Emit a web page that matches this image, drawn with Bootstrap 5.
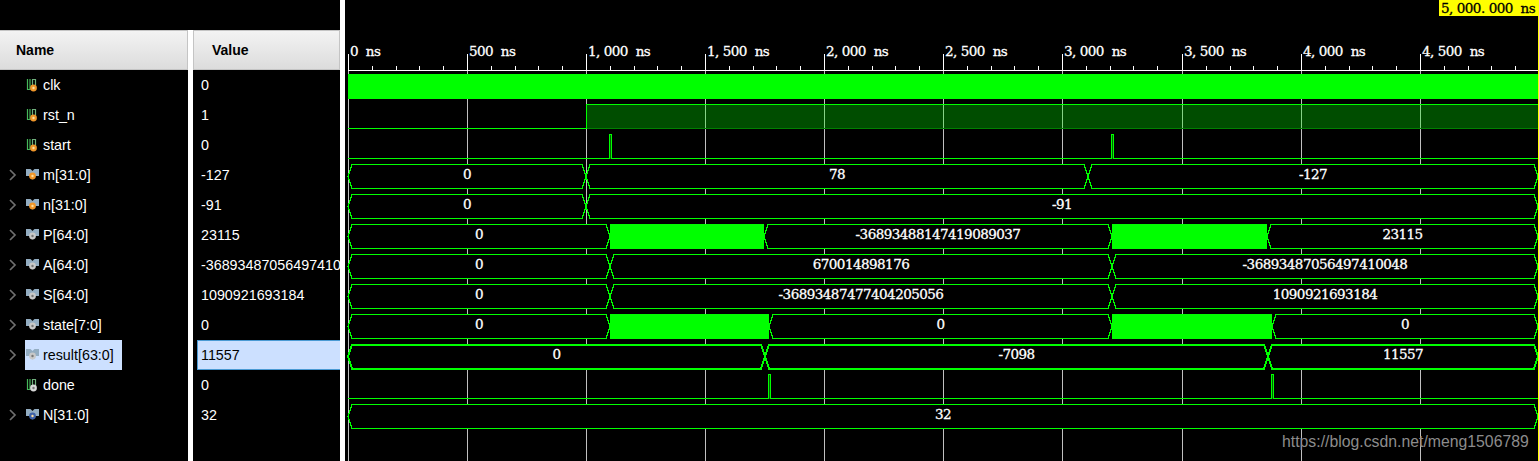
<!DOCTYPE html>
<html lang="en">
<head>
    <meta charset="UTF-8">
    <meta name="viewport" content="width=device-width, initial-scale=1.0">
    <title>Waveform</title>
    <link href="https://cdn.jsdelivr.net/npm/bootstrap@5.3.0/dist/css/bootstrap.min.css" rel="stylesheet">
    <style>
        html, body { height: 100%; background: #000; overflow: hidden; }
        body { font-family: "Liberation Sans", Arial, sans-serif; font-size: 14.3px; color: #fff; }
        .sim-shell { width: 1539px; height: 461px; }
        .side-block { width: 340px; }
        .top-band { height: 30px; }
        .name-pane { width: 188px; }
        .value-pane { width: 147px; }
        .sash { width: 5px; background: #fff; }
        .pane-head { height: 40px; background: linear-gradient(#f3f3f3, #dcdcdc); border: 1px solid #c4c4c4; color: #000; font-weight: 700; font-size: 14px; }
        .name-pane .pane-head { padding-left: 16px; border-left: 0; }
        .value-pane .pane-head { padding-left: 18px; }
        .sig-row { height: 30px; }
        .chev-slot { width: 25px; padding-left: 9px; }
        .sig-label { padding: 0 8px 0 1px; gap: 4px; }
        .sig-label span { padding-top: 2px; }
        .sig-row.picked .sig-label { background: #cce0ff; color: #000; }
        .val-cell { margin-left: 4px; padding: 2px 0 0 3px; white-space: nowrap; overflow: hidden; border: 1px solid transparent; border-width: 1px 0 1px 1px; }
        .sig-row.picked .val-cell { background: #cce0ff; color: #000; border-color: #4a9ad4; }
        .wave-wrap { width: 1194px; }
        .wave-wrap svg { display: block; }
        .ruler-txt, .bus-txt, .cursor-txt { font-family: "DejaVu Serif", "Liberation Mono", monospace; font-size: 13.5px; letter-spacing: -.55px; word-spacing: 4px; stroke-width: .3px; }
        .ruler-txt, .bus-txt { fill: #fff; stroke: #fff; }
        .cursor-txt { fill: #000; stroke: #000; }
        .wm-txt { font-family: "Liberation Sans", Arial, sans-serif; font-size: 15.8px; fill: #8c8c8c; }
    </style>
</head>
<body>
    <svg width="0" height="0" class="position-absolute">
        <symbol id="ic-chev" viewBox="0 0 8 12"><path d="M1 1l5 5-5 5" fill="none" stroke="#6f6f6f" stroke-width="1.7"/></symbol>
        <symbol id="ic-bit" viewBox="0 0 13 13">
            <path d="M1.500 1v10.500h2.500V1" fill="none" stroke="#45b85a" stroke-width="1.200"/>
            <path d="M6 1.500h3.500V7M6.500 1.500V8" fill="none" stroke="#6fae7c" stroke-width="1.200"/>
        </symbol>
        <symbol id="ic-bus" viewBox="0 0 13 11">
            <path d="M0 0h4.500l2 2 2-2H13v7H9.500l-3 3.500-3-3.500H0z" fill="#93adc2"/>
        </symbol>
    </svg>

    <div class="sim-shell d-flex">
        <div class="side-block d-flex flex-column">
            <div class="top-band"></div>
            <div class="d-flex flex-grow-1">
                <div class="name-pane">
                    <div class="pane-head d-flex align-items-center">Name</div>
                    <div id="name-rows"></div>
                </div>
                <div class="sash"></div>
                <div class="value-pane">
                    <div class="pane-head d-flex align-items-center">Value</div>
                    <div id="value-rows"></div>
                </div>
            </div>
        </div>
        <div class="sash"></div>
        <div class="wave-wrap" id="wave"></div>
    </div>

    <script>
        const GREEN = "#00ff00";
        const signals = [
            { name: "clk", value: "0", dot: "#f0962a", mark: "v" },
            { name: "rst_n", value: "1", dot: "#f0962a", mark: "v" },
            { name: "start", value: "0", dot: "#f0962a", mark: "v" },
            { name: "m[31:0]", value: "-127", bus: 1, dot: "#f0962a", mark: "v" },
            { name: "n[31:0]", value: "-91", bus: 1, dot: "#f0962a", mark: "v" },
            { name: "P[64:0]", value: "23115", bus: 1, dot: "#c8c8c8" },
            { name: "A[64:0]", value: "-36893487056497410048", bus: 1, dot: "#c8c8c8" },
            { name: "S[64:0]", value: "1090921693184", bus: 1, dot: "#c8c8c8" },
            { name: "state[7:0]", value: "0", bus: 1, dot: "#c8c8c8" },
            { name: "result[63:0]", value: "11557", bus: 1, dot: "#c8c8c8", picked: 1 },
            { name: "done", value: "0", dot: "#d8d8d8" },
            { name: "N[31:0]", value: "32", bus: 1, dot: "#3f62a8", mark: "c" }
        ];

        // name and value columns
        let names = "", values = "";
        signals.forEach(s => {
            let inner = s.mark ? "#ffe0a0" : "#777";
            let icon = s.bus
                ? `<svg width="13" height="14"><use href="#ic-bus" width="13" height="11" y="1"/><circle cx="6.500" cy="8" r="3.400" fill="${s.dot}"/><circle cx="6.500" cy="8" r="1.200" fill="${inner}"/></svg>`
                : `<svg width="13" height="14"><use href="#ic-bit" width="13" height="13"/><circle cx="7.500" cy="10" r="3.400" fill="${s.dot}"/><circle cx="7.500" cy="10" r="1.200" fill="${inner}"/></svg>`;
            let chev = s.bus ? `<svg width="8" height="12" class="d-block"><use href="#ic-chev"/></svg>` : "";
            let pick = s.picked ? " picked" : "";
            names += `<div class="sig-row d-flex align-items-center${pick}">
                <div class="chev-slot">${chev}</div>
                <div class="sig-label d-inline-flex align-items-center h-100">${icon}<span>${s.name}</span></div>
            </div>`;
            values += `<div class="sig-row${pick}"><div class="val-cell h-100 d-flex align-items-center">${s.value}</div></div>`;
        });
        document.getElementById("name-rows").innerHTML = names;
        document.getElementById("value-rows").innerHTML = values;

        // waveform canvas, coordinates are page pixels
        // the reference font is monospaced, so commas and dots get extra room
        const roomy = t => t.replace(/([,.])(.*)$/, (all, p, rest) => `${p}<tspan dx="4">${roomy(rest)}</tspan>`);

        const grid = [348, 467, 586, 705, 824, 943, 1062, 1182, 1301, 1420];
        const ruler = ["0 ns", "500 ns", "1,000 ns", "1,500 ns", "2,000 ns", "2,500 ns", "3,000 ns", "3,500 ns", "4,000 ns", "4,500 ns"];
        let svg = "";
        grid.forEach((x, i) => {
            svg += `<line x1="${x + .5}" x2="${x + .5}" y1="70" y2="461" stroke="#c0c0c0"/>`;
            svg += `<line x1="${x + .5}" x2="${x + .5}" y1="54" y2="70" stroke="#fff"/>`;
            svg += `<text class="ruler-txt" x="${x + 2}" y="56">${roomy(ruler[i])}</text>`;
            for (let k = 1; k < 5; k++) {
                let tx = Math.round(x + k * 23.8) + .5;
                svg += `<line x1="${tx}" x2="${tx}" y1="66" y2="70" stroke="#fff"/>`;
            }
        });
        svg += `<line x1="348" x2="1538" y1="70.5" y2="70.5" stroke="#fff"/>`;

        // clk, rst_n, start, done
        svg += `<rect x="348" y="74" width="1190" height="25" fill="${GREEN}"/>`;
        svg += `<rect x="587" y="105" width="951" height="23" fill="${GREEN}" fill-opacity=".3"/>`;
        svg += `<path d="M348 128.500H586.500V104.500H1538" fill="none" stroke="${GREEN}"/>`;
        svg += `<line x1="587" x2="1538" y1="128.500" y2="128.500" stroke="#008000"/>`;
        svg += `<line x1="348" x2="1538" y1="158.500" y2="158.500" stroke="${GREEN}"/>`;
        svg += `<line x1="348" x2="1538" y1="398.500" y2="398.500" stroke="${GREEN}"/>`;
        [[609, 134], [1111, 134], [768, 374], [1271, 374]].forEach(([x, y]) => {
            svg += `<rect x="${x}" y="${y}" width="3" height="25" fill="${GREEN}"/>`;
            svg += `<rect x="${x + 1}" y="${y + 1}" width="1" height="24" fill="#006000"/>`;
        });

        // bus rows: [row top, stroke, segments] - a segment with no label is a solid block
        const buses = [
            [164, 1, [[348, 586, "0"], [586, 1088, "78"], [1088, 1538, "-127"]]],
            [194, 1, [[348, 586, "0"], [586, 1538, "-91"]]],
            [224, 1, [[348, 610, "0"], [610, 764], [764, 1112, "-36893488147419089037"], [1112, 1267], [1267, 1538, "23115"]]],
            [254, 1, [[348, 610, "0"], [610, 1112, "670014898176"], [1112, 1538, "-36893487056497410048"]]],
            [284, 1, [[348, 610, "0"], [610, 1112, "-36893487477404205056"], [1112, 1538, "1090921693184"]]],
            [314, 1, [[348, 610, "0"], [610, 769], [769, 1112, "0"], [1112, 1272], [1272, 1538, "0"]]],
            [344, 2, [[348, 765, "0"], [765, 1268, "-7098"], [1268, 1538, "11557"]]],
            [404, 1, [[348, 1538, "32"]]]
        ];
        buses.forEach(([top, sw, segs]) => {
            let t = top + .5, b = top + 24.5, m = top + 12.5;
            segs.forEach(([a, z, label]) => {
                if (label === undefined) {
                    svg += `<rect x="${a}" y="${top}" width="${z - a}" height="25" fill="${GREEN}"/>`;
                    return;
                }
                svg += `<path d="M${a} ${m}L${a + 4} ${t}H${z - 4}L${z} ${m}L${z - 4} ${b}H${a + 4}Z" fill="#000" stroke="${GREEN}" stroke-width="${sw}"/>`;
                svg += `<text class="bus-txt" x="${(a + z) / 2}" y="${top + 15}" text-anchor="middle">${label}</text>`;
            });
        });

        // cursor
        svg += `<rect x="1439" y="0" width="100" height="16" fill="#ffff00"/>`;
        svg += `<text class="cursor-txt" x="1441" y="13">${roomy("5,000.000 ns")}</text>`;
        svg += `<line x1="1538.500" x2="1538.500" y1="16" y2="461" stroke="#ffff00"/>`;
        svg += `<text class="wm-txt" x="1282" y="447">https://blog.csdn.net/meng1506789</text>`;

        document.getElementById("wave").innerHTML =
            `<svg width="1194" height="461" viewBox="345 0 1194 461" shape-rendering="crispEdges">${svg}</svg>`;
    </script>

    <script src="https://cdn.jsdelivr.net/npm/bootstrap@5.3.0/dist/js/bootstrap.bundle.min.js"></script>
</body>
</html>
